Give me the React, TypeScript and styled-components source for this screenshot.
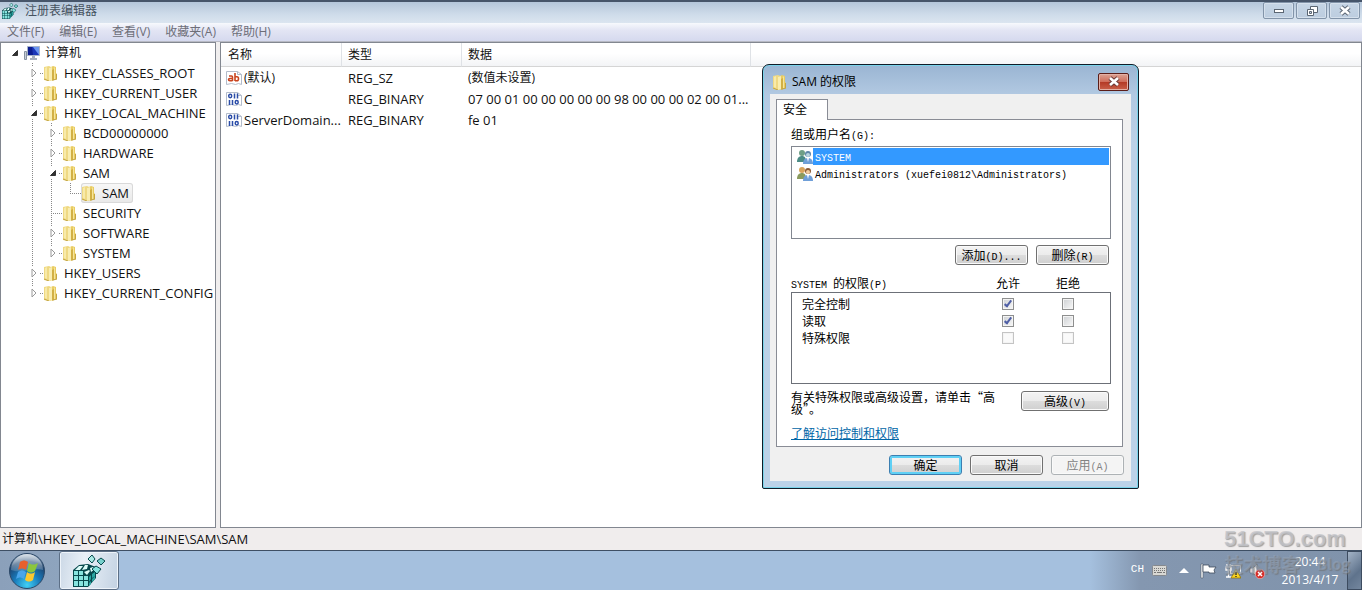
import React from 'react';
import styled, { createGlobalStyle, css } from 'styled-components';

const ui = "'Open Sans', 'Noto Sans CJK SC', sans-serif";
const song = "'Noto Sans CJK SC', sans-serif";

const GlobalStyle = createGlobalStyle`
  *, *::before, *::after { box-sizing: border-box; }
  body { margin: 0; background: #fff; font: 12px/16px ${ui}; color: #111; overflow: hidden; }
  button, input { margin: 0; padding: 0; font: inherit; color: inherit; }
  ul { list-style: none; margin: 0; padding: 0; }
  svg { display: block; flex: none; }
`;

const Desktop = styled.div`
  position: relative;
  display: flex;
  flex-direction: column;
  min-height: 100vh;
`;

const TitleBar = styled.header`
  display: flex;
  align-items: center;
  gap: 7px;
  height: 23px;
  padding: 0 0 3px 2px;
  border-top: 2px solid #46556a;
  background: linear-gradient(#b4c6da, #cfdcea 60%, #dbe5f0);
  color: #46525f;
`;

const WindowTitle = styled.h1`
  flex: 1;
  margin: 0;
  font: inherit;
`;

const Caption = styled.div`
  display: flex;
  align-self: flex-start;
  gap: 2px;
  padding-right: 2px;
`;

const CaptionButton = styled.button`
  display: flex;
  align-items: center;
  justify-content: center;
  width: 31px;
  height: 17px;
  border: 1px solid #8294a9;
  border-radius: 2px;
  background: linear-gradient(#c6d5e5, #bccddf);
  box-shadow: inset 0 0 0 1px #d5e0ec;
`;

const MenuBar = styled.nav`
  display: flex;
  gap: 15px;
  height: 18px;
  padding-left: 7px;
  background: linear-gradient(#f7f9fd, #e3e5f4 40%, #d5d9ee);
`;

const MenuItem = styled.button`
  border: 0;
  background: none;
  color: #6d6e78;
`;

const Main = styled.main`
  display: flex;
  flex: 1;
  gap: 4px;
  border-top: 1px solid #b8bac4;
  background: #f0eeee;
`;

const TreePane = styled.div`
  width: 216px;
  padding-left: 4px;
  border: 1px solid #828790;
  background: #fff;
`;

const ListPane = styled.div`
  flex: 1;
  min-width: 0;
  border: 1px solid #828790;
  background: #fff;
`;

const TreeRow = styled.div`
  display: flex;
  align-items: center;
  height: 20px;
  white-space: nowrap;
`;

const dotsV = 'repeating-linear-gradient(#888 0 1px, transparent 1px 2px)';
const dotsH = 'repeating-linear-gradient(90deg, #888 0 1px, transparent 1px 2px)';

type GuideKind = 'none' | 'line' | 'gap' | 'tee' | 'end' | 'stub';
const guideStyles: Record<GuideKind, ReturnType<typeof css> | string> = {
  none: '',
  line: css`background: ${dotsV} 8px 0 / 1px 20px no-repeat;`,
  gap: css`background: ${dotsV} 8px 0 / 1px 4px no-repeat, ${dotsV} 8px 16px / 1px 4px no-repeat, ${dotsH} 16px 10px / 3px 1px no-repeat;`,
  tee: css`background: ${dotsV} 8px 0 / 1px 20px no-repeat, ${dotsH} 8px 10px / 11px 1px no-repeat;`,
  end: css`background: ${dotsV} 8px 0 / 1px 10px no-repeat, ${dotsH} 8px 10px / 11px 1px no-repeat;`,
  stub: css`background: ${dotsV} 8px 0 / 1px 4px no-repeat, ${dotsH} 16px 10px / 3px 1px no-repeat;`,
};

const Guide = styled.span<{ $kind: GuideKind }>`
  display: flex;
  flex: none;
  align-items: center;
  justify-content: center;
  width: 19px;
  height: 20px;
  ${(p) => guideStyles[p.$kind]}
`;

const Toggle = styled.button`
  border: 0;
  background: none;
`;

const NodeLabel = styled.span<{ $selected?: boolean }>`
  display: flex;
  align-items: center;
  gap: 5px;
  height: 20px;
  padding-right: 4px;
  font-size: 13px;
  ${(p) => p.$selected && css`
    border-radius: 3px;
    background: linear-gradient(#f8f8f8, #e8e8e8);
    box-shadow: inset 0 0 0 1px #d9d9d9;
  `}
`;

const Cjk = styled.span`
  font-size: 12px;
`;

const ValueTable = styled.table`
  width: 100%;
  table-layout: fixed;
  border-collapse: separate;
  border-spacing: 0;
  font-size: 13px;
  white-space: nowrap;
`;

const Col = styled.col<{ $w?: number }>`
  width: ${(p) => (p.$w ? `${p.$w}px` : 'auto')};
`;

const HeadCell = styled.th`
  height: 24px;
  padding: 1px 0 0 6px;
  border-right: 1px solid #dfe2e6;
  border-bottom: 1px solid #d5d5d5;
  background: linear-gradient(#fff 45%, #f3f4f6);
  font-size: 12px;
  font-weight: 400;
  text-align: left;
  &:first-child { padding-left: 7px; }
  &:last-child { border-right: 0; }
`;

const Cell = styled.td`
  height: 21px;
  padding: 0 0 0 6px;
  &:first-child { padding-left: 5px; }
`;

const NameCell = styled.span`
  display: flex;
  align-items: center;
  gap: 2px;
`;

const StatusBar = styled.footer`
  display: flex;
  align-items: center;
  height: 22px;
  padding-left: 2px;
  background: #f0eded;
  font-size: 13px;
`;

const Taskbar = styled.div`
  display: flex;
  align-items: stretch;
  height: 40px;
  border-top: 1px solid #3e4f64;
  background: linear-gradient(90deg, #8ba0ba, #8ea4be 60px, #a5c0de 120px, #a5c0de calc(100% - 272px), #8497b0 calc(100% - 222px), #8093ab);
  color: #fff;
`;

const StartButton = styled.button`
  width: 54px;
  padding: 0 8px;
  border: 0;
  background: none;
`;

const TaskButton = styled.button`
  display: flex;
  align-items: center;
  justify-content: center;
  width: 60px;
  margin-left: 5px;
  border: 1px solid #5c6f86;
  border-radius: 3px;
  background: linear-gradient(100deg, #cbd8e6, #e9f0f7 40%, #c3d2e2);
  box-shadow: inset 0 0 0 1px #eef4fa;
`;

const Tray = styled.div`
  display: flex;
  align-items: center;
  margin-left: auto;
`;

const TrayIcons = styled.div`
  display: flex;
  align-items: center;
  gap: 8px;
  padding-right: 8px;
`;

const Lang = styled.span`
  padding-bottom: 4px;
  font: 11px/16px 'Liberation Mono', monospace;
`;

const TrayButton = styled.button`
  border: 0;
  background: none;
`;

const Clock = styled.time`
  align-self: stretch;
  width: 74px;
  padding-top: 2px;
  line-height: 18px;
  text-align: center;
`;

const ShowDesktop = styled.button`
  align-self: stretch;
  width: 15px;
  border: 1px solid #3d4c60;
  background: linear-gradient(135deg, #a3b3c6, #5f738c 60%, #74879e);
`;

const Watermark = styled.div`
  position: absolute;
  right: 12px;
  bottom: 14px;
  width: 126px;
  color: rgba(196, 197, 202, 0.8);
  font: 700 22px/26px 'Liberation Sans', sans-serif;
  text-shadow: 1px 1px 1px rgba(110, 110, 110, 0.6);
  white-space: nowrap;
  pointer-events: none;
`;

const WatermarkSub = styled.div`
  display: flex;
  align-items: center;
  justify-content: space-between;
  font: 700 19px/24px 'Noto Sans CJK SC', sans-serif;
  color: rgba(150, 165, 185, 0.5);
`;

const WatermarkSmall = styled.span`
  font-size: 15px;
`;

/* ---- permissions dialog ---- */

const Dialog = styled.section`
  position: absolute;
  top: 64px;
  left: 762px;
  width: 377px;
  padding: 0 6px 7px;
  border: 1px solid #101c28;
  border-radius: 7px 7px 2px 2px;
  background: linear-gradient(#9ab5d3, #b2c9e2 30px, #bcd1e7 80px, #bcd2e8);
  box-shadow: inset 0 0 0 1px #79d3ea;
  font: 12px/16px ${song};
  color: #000;
`;

const DialogTitle = styled.header`
  display: flex;
  align-items: center;
  gap: 4px;
  height: 29px;
  padding: 4px 3px 0;
  font-family: ${ui};
`;

const DialogHeading = styled.h2`
  flex: 1;
  margin: 0;
  font: inherit;
`;

const CloseButton = styled(CaptionButton)`
  height: 18px;
  border-color: #5b1d18;
  background: linear-gradient(#dca394, #cf6d5b 48%, #b43a26 52%, #c9604a);
  box-shadow: inset 0 0 0 1px #e3b0a5;
`;

const DialogBody = styled.div`
  padding: 5px 7px 6px 6px;
  margin: 0 1px;
  background: #f0f0f0;
`;

const Tab = styled.button`
  display: block;
  position: relative;
  width: 52px;
  height: 21px;
  margin-bottom: -1px;
  padding: 0 0 2px 6px;
  border: 1px solid #898c95;
  border-bottom: 0;
  background: #fff;
  text-align: left;
`;

const TabPanel = styled.div`
  margin-right: 1px;
  padding: 6px 11px 5px 14px;
  border: 1px solid #898c95;
  background: #fff;
`;

const Latin = styled.span`
  font: 10px/0 'Liberation Mono', monospace;
`;

const Users = styled.ul`
  height: 93px;
  margin-top: 4px;
  padding: 1px;
  border: 1px solid #828790;
`;

const User = styled.li`
  display: flex;
  height: 17px;
  padding-left: 4px;
  align-items: center;
`;

const UserName = styled.span<{ $selected?: boolean }>`
  flex: 1;
  height: 17px;
  padding-left: 2px;
  line-height: 15px;
  ${(p) => p.$selected && css`background: #3399ff; color: #fff;`}
`;

const ButtonRow = styled.div<{ $top: number }>`
  display: flex;
  justify-content: flex-end;
  gap: 8px;
  padding-top: ${(p) => p.$top}px;
`;

const PushButton = styled.button<{ $wide?: boolean; $primary?: boolean }>`
  width: ${(p) => (p.$wide ? 88 : 73)}px;
  height: 20px;
  flex: none;
  border: 1px solid ${(p) => (p.$primary ? '#3c7fb1' : '#707070')};
  border-radius: 3px;
  background: linear-gradient(#f3f3f3, #ebebeb 50%, #dddddd 50%, #cfcfcf);
  box-shadow: inset 0 0 0 ${(p) => (p.$primary ? '2px #5fd0f5' : '1px #fafafa')};
  line-height: 16px;
  &:disabled { border-color: #adb2b5; background: #f4f4f4; color: #838383; }
`;

const Pad = styled.div`
  padding-right: 2px;
`;

const PermTable = styled.table`
  width: 100%;
  margin-top: 9px;
  border-collapse: separate;
  border-spacing: 0;
  table-layout: fixed;
`;

const PermHead = styled.th`
  height: 18px;
  padding: 0;
  font-weight: 400;
  text-align: center;
  &:first-child { text-align: left; }
`;

const PermRow = styled.tr`
  & > * { height: 17px; padding: 0; font-weight: 400; text-align: center; }
  & > *:first-child { padding-left: 10px; border-left: 1px solid #6c7078; text-align: left; }
  & > *:last-child { border-right: 1px solid #6c7078; }
  &:first-child > * { height: 20px; padding-top: 3px; border-top: 1px solid #6c7078; }
  &:last-child > * { height: 55px; padding-bottom: 37px; border-bottom: 1px solid #6c7078; }
`;

const Check = styled.input`
  display: block;
  position: relative;
  width: 12px;
  height: 12px;
  margin: 0 auto;
  appearance: none;
  border: 1px solid #8e8f8f;
  background: linear-gradient(135deg, #cdd0d3, #f8f8f8);
  box-shadow: inset 0 0 0 1px #f4f4f4;
  &:disabled { border-color: #c4c4c4; background: #fafafa; }
  &:checked::after {
    content: '';
    position: absolute;
    top: 0;
    left: 3px;
    width: 4px;
    height: 8px;
    border: solid #4f5fa6;
    border-width: 0 2px 2px 0;
    transform: rotate(38deg);
  }
`;

const Advice = styled.div`
  display: flex;
  align-items: flex-start;
  justify-content: space-between;
  padding: 7px 2px 0 0;
  line-height: 12px;
`;

const AdviceText = styled.p`
  width: 210px;
  margin: 0;
`;

const HelpLink = styled.a`
  display: block;
  width: max-content;
  margin-top: 10px;
  color: #0066a7;
`;

/* ---- icons ---- */

const Folder = () => (
  <svg width="16" height="16" viewBox="0 0 16 16">
    <path d="M1 2l5-1 2 1v13l-2 1-5-1z" fill="#efd983" />
    <path d="M2 3l2-1v12l-2-1z" fill="#f8eaa9" />
    <path d="M6 3l4-2 3 1v6l1 1v5l-4 1-4 1z" fill="#e9cc62" />
    <path d="M6 3l3-1v13l-3 1z" fill="#f9edb0" />
    <path d="M9 5l2-1v11l-2 1z" fill="#d2b045" />
    <path d="M11 2l1 1v11h-1z" fill="#f6e59a" />
    <path d="M1 14l5 2M10 15l4-1M13.500 9v5" stroke="#c3a544" fill="none" />
  </svg>
);

const Computer = () => (
  <svg width="16" height="16" viewBox="0 0 16 16">
    <path d="M0.500 6.500h2v8h-2z" fill="#c9d0d8" stroke="#8792a0" />
    <path d="M3.500 1.500h12v9h-12z" fill="#1b36b8" stroke="#a7b3c8" />
    <path d="M9 2h6v8z" fill="#6a95f0" />
    <path d="M4 2h4l1 8H4z" fill="#0c1d90" />
    <path d="M8 11h3v2h2v2H6v-2h2z" fill="#a8b0bc" />
  </svg>
);

const Regedit = ({ size }: { size: number }) => (
  <svg width={size} height={size} viewBox="0 0 32 32">
    <path d="M0 15l6-5 9-1 8 3v11l-8 9H0z" fill="#06484c" />
    <path d="M1 16h4v4H1zM6 16h4v4H6zM1 21h4v4H1zM6 21h4v4H6zM11 21h4v4h-4zM1 26h4v5H1zM6 26h4v5H6zM11 26h4v5h-4z" fill="#86e4df" />
    <path d="M2 15l4-4h4l-3 4zM9 15l3-5h3l-1 4zM11 17l5-2 1 1-3 4zM17 13l3-1 2 2-4 3z" fill="#dcfbf8" />
    <path d="M16 22l2-2v4l-2 3zM19 19l3-2v4l-3 2zM16 28l2-2v3l-2 2zM19 24l3-3v3l-3 3z" fill="#2aa5a1" />
    <path d="M15 4l4-4 3 4-3 4z" fill="#a8e9e4" stroke="#06484c" />
    <path d="M24 6l4-3 4 3-4 4z" fill="#77d0cc" stroke="#06484c" />
    <path d="M19 14l4-3 5 3-4 5z" fill="#86e4df" stroke="#06484c" />
  </svg>
);

const Arrow = ({ open }: { open?: boolean }) =>
  open ? (
    <svg width="8" height="8" viewBox="0 0 8 8"><path d="M6.500 1.500v5h-5z" fill="#333" stroke="#333" /></svg>
  ) : (
    <svg width="8" height="10" viewBox="0 0 8 10"><path d="M2 1v8l4-4z" fill="#fff" stroke="#999" /></svg>
  );

const ValueIcon = ({ text }: { text?: boolean }) => (
  <svg width="16" height="16" viewBox="0 0 16 16">
    <path d="M0.500 1.500h11l4 3v10l-3-1-3 1-4-1-5 1z" fill="#fff" stroke="#b3bccb" />
    <path d="M11.500 1.500v3h4" fill="none" stroke="#b3bccb" />
    {text ? (
      <g fill="none" stroke="#c9441f" strokeWidth="1.600">
        <path d="M3 6h2.500q1 0 1 1v4M6.500 8.500H4Q2.500 8.500 2.500 9.600T4 10.800h2.500" />
        <path d="M9 3v8M9 6.800h2q1.500 0 1.500 2t-1.500 2H9" />
      </g>
    ) : (
      <g fill="none" stroke="#2b4da8" strokeWidth="1.500">
        <ellipse cx="4.200" cy="5" rx="1.500" ry="1.700" />
        <path d="M8.500 2.500v5M11.500 2.500v5M3.500 9v5M6.500 9v5" />
        <ellipse cx="10.700" cy="11.300" rx="1.500" ry="1.700" />
      </g>
    )}
  </svg>
);

const People = ({ warm }: { warm?: boolean }) => (
  <svg width="16" height="16" viewBox="0 0 16 16">
    <circle cx="5" cy="4" r="3" fill={warm ? '#d9a45c' : '#6f9f86'} />
    <path d="M0 13c0-4 2-6 5-6s4 2 4 6z" fill={warm ? '#8a9a5c' : '#4b8c86'} />
    <circle cx="11" cy="5" r="3" fill={warm ? '#8b5a35' : '#5d86a8'} />
    <circle cx="11" cy="6" r="2" fill={warm ? '#f1cda0' : '#b9d6e0'} />
    <path d="M6 15c0-4 2-6 5-6s5 2 5 6z" fill="#6f9fd8" />
    <path d="M10 9h2l-1 4z" fill="#fff" />
  </svg>
);

const CloseGlyph = ({ edge }: { edge: string }) => (
  <svg width="14" height="11" viewBox="0 0 14 11">
    <path d="M3 2l8 7M11 2l-8 7" stroke={edge} strokeWidth="4.600" />
    <path d="M3 2l8 7M11 2l-8 7" stroke="#fff" strokeWidth="2.600" />
  </svg>
);

const StartOrb = () => (
  <svg width="38" height="38" viewBox="0 0 38 38">
    <defs>
      <radialGradient id="orb" cx="50%" cy="90%" r="85%">
        <stop offset="0" stopColor="#41d0f5" />
        <stop offset="0.450" stopColor="#1878b8" />
        <stop offset="0.800" stopColor="#1d4470" />
        <stop offset="1" stopColor="#7792ad" />
      </radialGradient>
      <linearGradient id="shine" x1="0" y1="0" x2="0" y2="1">
        <stop offset="0" stopColor="#fff" stopOpacity="0.700" />
        <stop offset="1" stopColor="#fff" stopOpacity="0.150" />
      </linearGradient>
    </defs>
    <circle cx="19" cy="19" r="17.500" fill="url(#orb)" stroke="#2c4867" />
    <path d="M3 18a16 16 0 0 1 32 0c-8-3-22 4-32 0z" fill="url(#shine)" />
    <path d="M12 10c3-2 5-2 8 0l-2 8c-3-2-5-2-8 0z" fill="#e8602c" />
    <path d="M21 11c3 2 5 2 9 0l-3 8c-3 2-5 2-8 0z" fill="#8cc63c" />
    <path d="M10 20c3-2 5-2 8 0l-2 7c-3-2-5-2-8 0z" fill="#4aa5ea" />
    <path d="M19 20c3 2 5 2 8 0l-2 8c-3 2-5 2-8 0z" fill="#fcc82e" />
  </svg>
);

const KeyboardIcon = () => (
  <svg width="15" height="11" viewBox="0 0 15 11">
    <rect x="0.500" y="0.500" width="14" height="10" rx="1" fill="#d8d8d4" stroke="#85898e" />
    <path d="M2 3.500h11M2 5.500h11" stroke="#777" strokeDasharray="1 1" />
    <path d="M2 7.500h2M5 7.500h5M11 7.500h2" stroke="#777" />
  </svg>
);

const FlagIcon = () => (
  <svg width="17" height="16" viewBox="0 0 17 16">
    <path d="M1 1h2v14H1z" fill="#fff" stroke="#4d5a6a" strokeWidth="0.600" />
    <path d="M3 2h6v2h7l-2 3 1 3H9V9H3z" fill="#fff" stroke="#3d4a5a" strokeWidth="0.800" />
  </svg>
);

const NetworkIcon = () => (
  <svg width="16" height="16" viewBox="0 0 16 16">
    <path d="M5.500 2.500h10v8h-10z" fill="#8b9bb0" stroke="#fff" />
    <path d="M2 1v3M5 1v3M1 4h5v3H1zM3.500 7v7M1 14h7" fill="none" stroke="#fff" strokeWidth="1.300" />
    <path d="M11 6l5 9H6z" fill="#fbd41e" stroke="#8a6a00" strokeWidth="0.700" />
    <path d="M11 9v3M11 13v1" stroke="#222" strokeWidth="1.300" />
  </svg>
);

const VolumeIcon = () => (
  <svg width="16" height="16" viewBox="0 0 16 16">
    <path d="M1 5h3l4-4v13l-4-4H1z" fill="#f2f2f2" stroke="#5c6878" strokeWidth="0.700" />
    <circle cx="11" cy="11" r="4.700" fill="#d62d28" stroke="#f3c1bd" strokeWidth="0.600" />
    <path d="M9 9l4 4M13 9l-4 4" stroke="#fff" strokeWidth="1.500" />
  </svg>
);

/* ---- data ---- */

interface TreeNode {
  name: string;
  guides: GuideKind[];
  state: 'open' | 'closed' | 'leaf';
  selected?: boolean;
}

const tree: TreeNode[] = [
  { name: 'HKEY_CLASSES_ROOT', guides: ['none', 'gap'], state: 'closed' },
  { name: 'HKEY_CURRENT_USER', guides: ['none', 'gap'], state: 'closed' },
  { name: 'HKEY_LOCAL_MACHINE', guides: ['none', 'gap'], state: 'open' },
  { name: 'BCD00000000', guides: ['none', 'line', 'gap'], state: 'closed' },
  { name: 'HARDWARE', guides: ['none', 'line', 'gap'], state: 'closed' },
  { name: 'SAM', guides: ['none', 'line', 'gap'], state: 'open' },
  { name: 'SAM', guides: ['none', 'line', 'line', 'end'], state: 'leaf', selected: true },
  { name: 'SECURITY', guides: ['none', 'line', 'tee'], state: 'leaf' },
  { name: 'SOFTWARE', guides: ['none', 'line', 'gap'], state: 'closed' },
  { name: 'SYSTEM', guides: ['none', 'line', 'stub'], state: 'closed' },
  { name: 'HKEY_USERS', guides: ['none', 'gap'], state: 'closed' },
  { name: 'HKEY_CURRENT_CONFIG', guides: ['none', 'stub'], state: 'closed' },
];

const values = [
  { name: <Cjk>(默认)</Cjk>, text: true, type: 'REG_SZ', data: <Cjk>(数值未设置)</Cjk> },
  { name: 'C', type: 'REG_BINARY', data: '07 00 01 00 00 00 00 00 98 00 00 00 02 00 01...' },
  { name: 'ServerDomain...', type: 'REG_BINARY', data: 'fe 01' },
];

const permissions = [
  { name: '完全控制', allow: true, enabled: true },
  { name: '读取', allow: true, enabled: true },
  { name: '特殊权限', allow: false, enabled: false },
];

const menus = ['文件(F)', '编辑(E)', '查看(V)', '收藏夹(A)', '帮助(H)'];

const PermissionsDialog = () => (
  <Dialog role="dialog" aria-labelledby="dialog-title">
    <DialogTitle>
      <Folder />
      <DialogHeading id="dialog-title">SAM 的权限</DialogHeading>
      <CloseButton aria-label="关闭"><CloseGlyph edge="#6b3a38" /></CloseButton>
    </DialogTitle>
    <DialogBody>
      <Tab role="tab">安全</Tab>
      <TabPanel>
        <div id="users-label">组或用户名<Latin>(G):</Latin></div>
        <Users aria-labelledby="users-label">
          <User><People /><UserName $selected><Latin>SYSTEM</Latin></UserName></User>
          <User><People warm /><UserName><Latin>Administrators (xuefei0812\Administrators)</Latin></UserName></User>
        </Users>
        <Pad>
          <ButtonRow $top={6}>
            <PushButton>添加<Latin>(D)...</Latin></PushButton>
            <PushButton>删除<Latin>(R)</Latin></PushButton>
          </ButtonRow>
        </Pad>
        <PermTable>
          <colgroup><Col /><Col $w={60} /><Col $w={60} /><Col $w={13} /></colgroup>
          <thead>
            <tr>
              <PermHead><Latin>SYSTEM </Latin>的权限<Latin>(P)</Latin></PermHead>
              <PermHead>允许</PermHead>
              <PermHead>拒绝</PermHead>
              <PermHead />
            </tr>
          </thead>
          <tbody>
            {permissions.map((p) => (
              <PermRow key={p.name}>
                <th scope="row">{p.name}</th>
                <td><Check type="checkbox" aria-label={`${p.name} 允许`} defaultChecked={p.allow} disabled={!p.enabled} /></td>
                <td><Check type="checkbox" aria-label={`${p.name} 拒绝`} disabled={!p.enabled} /></td>
                <td />
              </PermRow>
            ))}
          </tbody>
        </PermTable>
        <Advice>
          <AdviceText>有关特殊权限或高级设置，请单击“高级”。</AdviceText>
          <PushButton $wide>高级<Latin>(V)</Latin></PushButton>
        </Advice>
        <HelpLink href="#help">了解访问控制和权限</HelpLink>
      </TabPanel>
      <ButtonRow $top={8}>
        <PushButton $primary>确定</PushButton>
        <PushButton>取消</PushButton>
        <PushButton disabled>应用<Latin>(A)</Latin></PushButton>
      </ButtonRow>
    </DialogBody>
  </Dialog>
);

export default function App() {
  return (
    <Desktop>
      <GlobalStyle />
      <TitleBar>
        <Regedit size={16} />
        <WindowTitle>注册表编辑器</WindowTitle>
        <Caption>
          <CaptionButton aria-label="最小化">
            <svg width="12" height="6" viewBox="0 0 12 6"><rect x="1.500" y="1.500" width="9" height="3" fill="#fff" stroke="#5b6673" /></svg>
          </CaptionButton>
          <CaptionButton aria-label="还原">
            <svg width="12" height="12" viewBox="0 0 12 12" fill="#fff" stroke="#5b6673">
              <path d="M4.500 1.500h7v6h-7z" />
              <path d="M1.500 4.500h6v6h-6z" />
              <path d="M3.500 6.500h2v2h-2z" fill="#c6d5e5" />
            </svg>
          </CaptionButton>
          <CaptionButton aria-label="关闭"><CloseGlyph edge="#5b6673" /></CaptionButton>
        </Caption>
      </TitleBar>
      <MenuBar>
        {menus.map((m) => <MenuItem key={m}>{m}</MenuItem>)}
      </MenuBar>
      <Main>
        <TreePane>
          <TreeRow>
            <Guide $kind="none"><Toggle aria-label="折叠"><Arrow open /></Toggle></Guide>
            <NodeLabel><Computer /><Cjk>计算机</Cjk></NodeLabel>
          </TreeRow>
          {tree.map((n) => (
            <TreeRow key={n.name + n.guides.length}>
              {n.guides.map((g, i) => (
                <Guide key={i} $kind={g}>
                  {i === n.guides.length - 1 && n.state !== 'leaf' && (
                    <Toggle aria-label={n.state === 'open' ? '折叠' : '展开'}><Arrow open={n.state === 'open'} /></Toggle>
                  )}
                </Guide>
              ))}
              <NodeLabel $selected={n.selected}><Folder />{n.name}</NodeLabel>
            </TreeRow>
          ))}
        </TreePane>
        <ListPane>
          <ValueTable>
            <colgroup><Col $w={121} /><Col $w={120} /><Col $w={289} /><Col /></colgroup>
            <thead>
              <tr><HeadCell>名称</HeadCell><HeadCell>类型</HeadCell><HeadCell>数据</HeadCell><HeadCell /></tr>
            </thead>
            <tbody>
              {values.map((v, i) => (
                <tr key={i}>
                  <Cell><NameCell><ValueIcon text={v.text} />{v.name}</NameCell></Cell>
                  <Cell>{v.type}</Cell>
                  <Cell>{v.data}</Cell>
                  <Cell />
                </tr>
              ))}
            </tbody>
          </ValueTable>
        </ListPane>
      </Main>
      <StatusBar><Cjk>计算机</Cjk>\HKEY_LOCAL_MACHINE\SAM\SAM</StatusBar>
      <Taskbar>
        <StartButton aria-label="开始"><StartOrb /></StartButton>
        <TaskButton aria-label="注册表编辑器"><Regedit size={32} /></TaskButton>
        <Tray>
          <TrayIcons>
            <Lang>CH</Lang>
            <TrayButton aria-label="键盘"><KeyboardIcon /></TrayButton>
            <TrayButton aria-label="显示隐藏的图标">
              <svg width="17" height="5" viewBox="0 0 17 5"><path d="M4 5l5-5 5 5z" fill="#fff" /></svg>
            </TrayButton>
            <TrayButton aria-label="操作中心"><FlagIcon /></TrayButton>
            <TrayButton aria-label="网络"><NetworkIcon /></TrayButton>
            <TrayButton aria-label="音量"><VolumeIcon /></TrayButton>
          </TrayIcons>
          <Clock>20:44<br />2013/4/17</Clock>
          <ShowDesktop aria-label="显示桌面" />
        </Tray>
      </Taskbar>
      <Watermark>51CTO.com<WatermarkSub>技术博客<WatermarkSmall>Blog</WatermarkSmall></WatermarkSub></Watermark>
      <PermissionsDialog />
    </Desktop>
  );
}
